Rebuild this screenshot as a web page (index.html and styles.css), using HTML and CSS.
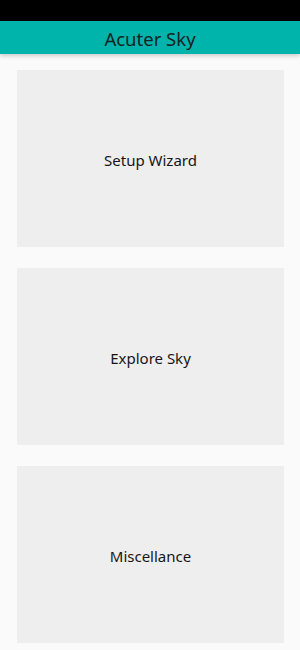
FILE: index.html
```html
<!DOCTYPE html>
<html>
<head>
  <meta charset="UTF-8">
  <title>Acuter Sky</title>
  <link rel="stylesheet" href="styles.css">
</head>
<body>
<div class="status-bar"></div>
<div class="app-bar">Acuter Sky</div>
<div class="menu">
  <a href="javascript:void (0);" class="menu-item">Setup Wizard</a>
  <a href="javascript:void (0);" class="menu-item">Explore Sky</a>
  <a href="javascript:void (0);" class="menu-item">Miscellance</a>
</div>
</body>
</html>
```

FILE: styles.css
```css
* {
  margin: 0;
  padding: 0;
  box-sizing: border-box;
}
a {
  text-decoration: none;
}
body {
  background-color: #fafafa;
  font-family: "Noto Sans", "Open Sans", sans-serif;
  color: #1c1c1c;
}
.status-bar {
  height: 21px;
  background-color: #000;
}
.app-bar {
  position: relative;
  height: 33px;
  line-height: 35px;
  background-color: #00b4ac;
  text-align: center;
  font-size: 18.5px;
  color: #142222;
  box-shadow: 0 2px 4px rgba(0, 0, 0, 0.18);
  z-index: 1;
}
.menu {
  display: flex;
  flex-direction: column;
  gap: 21px;
  padding: 16px 16px 0 17px;
}
.menu-item {
  display: flex;
  align-items: center;
  justify-content: center;
  height: 177px;
  padding-top: 2px;
  background-color: #eeeeee;
  font-size: 15px;
  color: #161616;
}
```
